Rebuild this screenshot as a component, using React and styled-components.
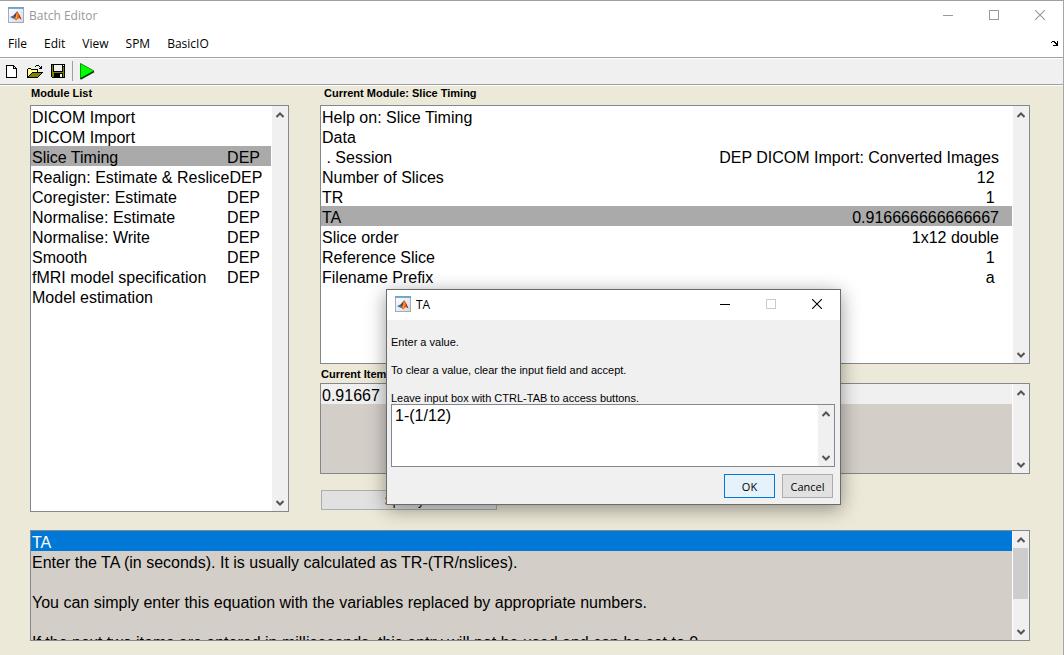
import React from "react";
import styled, { createGlobalStyle, css } from "styled-components";

const GlobalStyle = createGlobalStyle`
  *, *::before, *::after { box-sizing: border-box; }
  html, body { margin: 0; padding: 0; }
  body { background: #ece9d8; color: #000; }
  button, textarea { font: inherit; color: inherit; margin: 0; padding: 0; }
`;

const uiFont = `"Open Sans", "Noto Sans", sans-serif`;
const bodyFont = `"Liberation Sans", Arial, sans-serif`;
const frameGrey = "#828790";

const Window = styled.div`
  position: relative;
  display: flex;
  flex-direction: column;
  min-height: 100vh;
  border-top: 1px solid #a0a0a0;
  border-right: 1px solid #a6a6a6;
  background: #ece9d8;
  font-family: ${bodyFont};
  overflow: hidden;
`;

const TitleBar = styled.header`
  display: flex;
  align-items: center;
  height: ${(p) => (p.$dialog ? 30 : 28)}px;
  padding: 0 0 ${(p) => (p.$dialog ? 2 : 0)}px 8px;
  background: #fff;
  color: ${(p) => (p.$dialog ? "#000" : "#999")};
`;

const Title = styled.h1`
  flex: 1;
  margin: 0 0 0 5px;
  padding-top: 2px;
  font: 400 12px/18px ${uiFont};
`;

const CaptionButton = styled.button`
  display: flex;
  align-items: center;
  justify-content: center;
  width: 46px;
  height: 100%;
  border: 0;
  background: transparent;
  color: ${(p) => (p.$faded ? "#ccc" : "inherit")};
`;

const MenuBar = styled.nav`
  display: flex;
  align-items: center;
  gap: 17px;
  height: 28px;
  padding: 2px 4px 0 8px;
  background: #fff;
  font: 400 12px/18px ${uiFont};
`;

const MenuItem = styled.button`
  border: 0;
  background: transparent;
`;

const DockButton = styled(MenuItem)`
  display: flex;
  margin-left: auto;
`;

const Toolbar = styled.div`
  display: flex;
  align-items: center;
  height: 28px;
  border-top: 1px solid #a0a0a0;
  border-bottom: 1px solid #a0a0a0;
  box-shadow: inset 0 1px #fff, 0 1px #fff;
  background: #f0f0f0;
`;

const ToolButton = styled.button`
  display: flex;
  align-items: center;
  justify-content: center;
  width: 23px;
  height: 24px;
  border: 0;
  background: transparent;
`;

const Separator = styled.span`
  width: 1px;
  height: 20px;
  margin: 0 3px;
  background: #a0a0a0;
`;

const Content = styled.main`
  display: flex;
  flex-direction: column;
  gap: 18px;
  padding: 0 33px 14px 30px;
`;

const Columns = styled.div`
  display: grid;
  grid-template-columns: 259fr 710fr;
  gap: 31px;
`;

const Column = styled.section`
  display: flex;
  flex-direction: column;
  align-items: stretch;
  min-width: 0;
`;

const Heading = styled.h2`
  margin: 0;
  padding: ${(p) => (p.$inner ? "3px 0 2px" : "1px 0 5px")};
  padding-left: ${(p) => p.$indent || 1}px;
  font: 700 11px/14px ${bodyFont};
`;

const Box = styled.div`
  display: flex;
  height: ${(p) => p.$height}px;
  border: 1px solid ${frameGrey};
  background: #fff;
`;

const List = styled.ul`
  flex: 1;
  min-width: 0;
  margin: 0 1px 0 0;
  padding: 0;
  overflow: hidden;
  list-style: none;
  background: ${(p) => (p.$shaded ? "#d4cec8" : "#fff")};
`;

const rowTones = {
  selected: css`background: #aaa;`,
  light: css`background: #f0f0f0;`,
  active: css`background: #0078d7; color: #fff;`,
};

const Row = styled.li`
  display: flex;
  justify-content: space-between;
  height: 20px;
  padding: 2px ${(p) => p.$end || 0}px 0 1px;
  font-size: 16px;
  line-height: 20px;
  white-space: pre;
  ${(p) => rowTones[p.$tone]}
`;

const ScrollTrack = styled.div`
  display: flex;
  flex-direction: column;
  width: 16px;
  background: #f0f0f0;
`;

const ScrollButton = styled.button`
  display: flex;
  align-items: center;
  justify-content: center;
  width: 15px;
  height: 17px;
  border: 0;
  background: transparent;
`;

const ScrollSpace = styled.div`
  flex: 1;
`;

const Thumb = styled.div`
  width: 15px;
  height: 51px;
  background: #cdcdcd;
`;

const PushButton = styled.button`
  width: ${(p) => p.$width}px;
  height: ${(p) => p.$height}px;
  padding-top: 2px;
  border: 1px solid ${(p) => (p.$primary ? "#0078d7" : "#adadad")};
  background: ${(p) => (p.$primary ? "#e5f1fb" : "#e1e1e1")};
  font: 400 ${(p) => (p.$ui ? 11 : 12)}px/14px ${(p) => (p.$ui ? uiFont : bodyFont)};
`;

const SpecifyRow = styled.div`
  display: flex;
  padding: 16px 0 0 1px;
`;

const Dialog = styled.form`
  position: absolute;
  left: 386px;
  top: 288px;
  width: 455px;
  border: 1px solid #6b6b6b;
  background: #f0f0f0;
  box-shadow: 0 4px 18px rgba(0, 0, 0, 0.4);
`;

const DialogBody = styled.div`
  display: flex;
  flex-direction: column;
  padding: 15px 5px 6px 4px;
`;

const Prompt = styled.label`
  display: flex;
  flex-direction: column;
  gap: 14px;
  height: 69px;
  font-size: 11px;
  line-height: 14px;
`;

const ValueInput = styled.textarea`
  flex: 1;
  min-width: 0;
  padding: 1px 3px;
  border: 0;
  outline: 0;
  resize: none;
  overflow: hidden;
  background: #fff;
  font: 400 16px/20px ${bodyFont};
`;

const Actions = styled.div`
  display: flex;
  justify-content: flex-end;
  gap: 7px;
  padding: 7px 2px 0 0;
`;

const MatlabIcon = () => (
  <svg width="16" height="16" viewBox="0 0 16 16" aria-hidden="true">
    <defs>
      <linearGradient id="pane" x1="0" y1="0" x2="1" y2="1">
        <stop offset="0" stopColor="#fff" />
        <stop offset="1" stopColor="#d3dae4" />
      </linearGradient>
    </defs>
    <rect x=".5" y=".5" width="15" height="15" fill="url(#pane)" stroke="#a3abb9" />
    <rect width="16" height="2" fill="#7c9fbd" />
    <rect x="1" y="1" width="14" height="1" fill="#6aaee0" />
    <path d="M2 10 L5.500 8.500 L8 10.500 L6 12 Z" fill="#2f74b5" />
    <path d="M5.500 8.500 L9 4.500 L8.500 9.500 L7 11.500 Z" fill="#5b3550" />
    <path d="M9 4 Q10 4 11 7.500 L13.500 12.500 L11 11 L8 13.500 L6 11.500 Q8 10 9 4Z" fill="#e2631b" />
    <path d="M9 5.500 L9.500 8 L9 11 L8 13 L7.500 11Z" fill="#f7a637" />
    <path d="M10.500 6 L13.500 12.500 L11.500 11Z" fill="#8f2413" />
  </svg>
);

const MinimizeIcon = () => (
  <svg width="10" height="10" viewBox="0 0 10 10" shapeRendering="crispEdges" aria-hidden="true">
    <path d="M0 5h10v1H0z" fill="currentColor" />
  </svg>
);

const MaximizeIcon = () => (
  <svg width="10" height="10" viewBox="0 0 10 10" aria-hidden="true">
    <rect x=".5" y=".5" width="9" height="9" fill="none" stroke="currentColor" />
  </svg>
);

const CloseIcon = () => (
  <svg width="10" height="10" viewBox="0 0 10 10" aria-hidden="true">
    <path d="M0 0l10 10M10 0L0 10" stroke="currentColor" strokeWidth="1.100" />
  </svg>
);

const DockIcon = () => (
  <svg width="8" height="6" viewBox="0 0 8 6" shapeRendering="crispEdges" aria-hidden="true">
    <path d="M1 0h3v1h1v1h1V1h1v4H3V4h2V3H4V2H3V1H1zM0 1h1v1H0zM6 0h1v1H6zM2 4h1v1H2z" />
  </svg>
);

const NewIcon = () => (
  <svg width="11" height="13" viewBox="0 0 11 13" shapeRendering="crispEdges" aria-hidden="true">
    <path d="M0 0h8v1h1v1h1v1h1v10H0z" />
    <path d="M1 1h6v3h3v8H1z" fill="#fff" />
    <path d="M8 2h1v1H8z" fill="#fff" />
  </svg>
);

const OpenIcon = () => (
  <svg width="16" height="13" viewBox="0 0 16 13" shapeRendering="crispEdges" aria-hidden="true">
    <path d="M0 4h1V3h3v1h7v3h5v1h-1v1h-1v1h-1v1h-1v1h-1v1H0z" />
    <path d="M1 4h3v1h6v2H5v1H4v1H3v1H2v1H1z" fill="#ffff8c" />
    <path d="M5 8h9v1h-1v1h-1v1h-1v1H2v-1h1v-1h1V9h1z" fill="#808000" />
    <path d="M8 1h1v1H8zM9 0h3v1H9zM12 1h1v1h-1zM14 1h1v3h-3V3h1V2h1z" />
  </svg>
);

const SaveIcon = () => (
  <svg width="14" height="14" viewBox="0 0 14 14" shapeRendering="crispEdges" aria-hidden="true">
    <path d="M0 0h14v14H1v-1H0z" />
    <path d="M1 1h1v7h10V3h1v10H1z" fill="#808000" />
    <path d="M3 1h8v6H3zM12 1h1v1h-1z" fill="#f0f0f0" />
    <path d="M3 9h9v4H3z" />
    <path d="M9 10h2v3H9z" fill="#f0f0f0" />
  </svg>
);

const RunIcon = () => (
  <svg width="15" height="17" viewBox="0 0 15 17" aria-hidden="true">
    <path d="M.5 .5L14 8.500L.5 16z" fill="#0f0" />
    <path d="M.5 16V.5L14 8" fill="none" stroke="#009a00" />
    <path d="M.5 16L14 8.500" stroke="#003c00" strokeWidth="1.500" />
  </svg>
);

const Chevron = ({ down }) => (
  <svg width="8" height="6" viewBox="0 0 8 6" aria-hidden="true">
    <path d={down ? "M.5 1L4 4.500L7.500 1" : "M.5 5L4 1.500L7.500 5"} fill="none" stroke="#555" strokeWidth="2" />
  </svg>
);

const ScrollBar = ({ thumb }) => (
  <ScrollTrack>
    <ScrollButton type="button" aria-label="Scroll up"><Chevron /></ScrollButton>
    {thumb && <Thumb />}
    <ScrollSpace />
    <ScrollButton type="button" aria-label="Scroll down"><Chevron down /></ScrollButton>
  </ScrollTrack>
);

const WindowControls = ({ dialog }) => (
  <>
    <CaptionButton type="button" aria-label="Minimize"><MinimizeIcon /></CaptionButton>
    <CaptionButton type="button" aria-label="Maximize" $faded={dialog} disabled={dialog}><MaximizeIcon /></CaptionButton>
    <CaptionButton type="button" aria-label="Close"><CloseIcon /></CaptionButton>
  </>
);

const menus = ["File", "Edit", "View", "SPM", "BasicIO"];

const modules = [
  ["DICOM Import"],
  ["DICOM Import"],
  ["Slice Timing", "DEP"],
  ["Realign: Estimate & Reslice", "DEP"],
  ["Coregister: Estimate", "DEP"],
  ["Normalise: Estimate", "DEP"],
  ["Normalise: Write", "DEP"],
  ["Smooth", "DEP"],
  ["fMRI model specification", "DEP"],
  ["Model estimation"],
];

const settings = [
  ["Help on: Slice Timing"],
  ["Data"],
  [" . Session", "DEP DICOM Import: Converted Images"],
  ["Number of Slices", "12 "],
  ["TR", "1 "],
  ["TA", "0.916666666666667"],
  ["Slice order", "1x12 double"],
  ["Reference Slice", "1 "],
  ["Filename Prefix", "a "],
];

const helpLines = [
  "Enter the TA (in seconds). It is usually calculated as TR-(TR/nslices).",
  "",
  "You can simply enter this equation with the variables replaced by appropriate numbers.",
  "",
  "If the next two items are entered in milliseconds, this entry will not be used and can be set to 0.",
];

const Entries = ({ items, selected, end, label }) => (
  <List role="listbox" aria-label={label}>
    {items.map(([name, value], i) => (
      <Row key={i} role="option" aria-selected={i === selected} $tone={i === selected ? "selected" : undefined} $end={end}>
        <span>{name}</span>
        {value && <span>{value}</span>}
      </Row>
    ))}
  </List>
);

export default function App() {
  return (
    <Window>
      <GlobalStyle />
      <TitleBar>
        <MatlabIcon />
        <Title>Batch Editor</Title>
        <WindowControls />
      </TitleBar>
      <MenuBar>
        {menus.map((m) => <MenuItem key={m} type="button">{m}</MenuItem>)}
        <DockButton type="button" aria-label="Dock window"><DockIcon /></DockButton>
      </MenuBar>
      <Toolbar>
        <ToolButton type="button" aria-label="New"><NewIcon /></ToolButton>
        <ToolButton type="button" aria-label="Open"><OpenIcon /></ToolButton>
        <ToolButton type="button" aria-label="Save"><SaveIcon /></ToolButton>
        <Separator />
        <ToolButton type="button" aria-label="Run"><RunIcon /></ToolButton>
      </Toolbar>
      <Content>
        <Columns>
          <Column>
            <Heading>Module List</Heading>
            <Box $height={407}>
              <Entries items={modules} selected={2} end={11} label="Module List" />
              <ScrollBar />
            </Box>
          </Column>
          <Column>
            <Heading $indent={4}>Current Module: Slice Timing</Heading>
            <Box $height={259}>
              <Entries items={settings} selected={5} end={13} label="Current Module" />
              <ScrollBar />
            </Box>
            <Heading $inner>Current Item: TA</Heading>
            <Box $height={91}>
              <List $shaded>
                <Row $tone="light">0.91667</Row>
              </List>
              <ScrollBar />
            </Box>
            <SpecifyRow>
              <PushButton type="button" $width={176} $height={20}>Specify...</PushButton>
            </SpecifyRow>
          </Column>
        </Columns>
        <Box $height={111}>
          <List $shaded>
            <Row $tone="active">TA</Row>
            {helpLines.map((line, i) => <Row key={i}>{line}</Row>)}
          </List>
          <ScrollBar thumb />
        </Box>
      </Content>
      <Dialog onSubmit={(e) => e.preventDefault()}>
        <TitleBar $dialog as="div">
          <MatlabIcon />
          <Title as="h2">TA</Title>
          <WindowControls dialog />
        </TitleBar>
        <DialogBody>
          <Prompt htmlFor="value">
            <span>Enter a value.</span>
            <span>To clear a value, clear the input field and accept.</span>
            <span>Leave input box with CTRL-TAB to access buttons.</span>
          </Prompt>
          <Box $height={63}>
            <ValueInput id="value" defaultValue="1-(1/12)" />
            <ScrollBar />
          </Box>
          <Actions>
            <PushButton type="submit" $primary $ui $width={51} $height={24}>OK</PushButton>
            <PushButton type="button" $ui $width={51} $height={24}>Cancel</PushButton>
          </Actions>
        </DialogBody>
      </Dialog>
    </Window>
  );
}
